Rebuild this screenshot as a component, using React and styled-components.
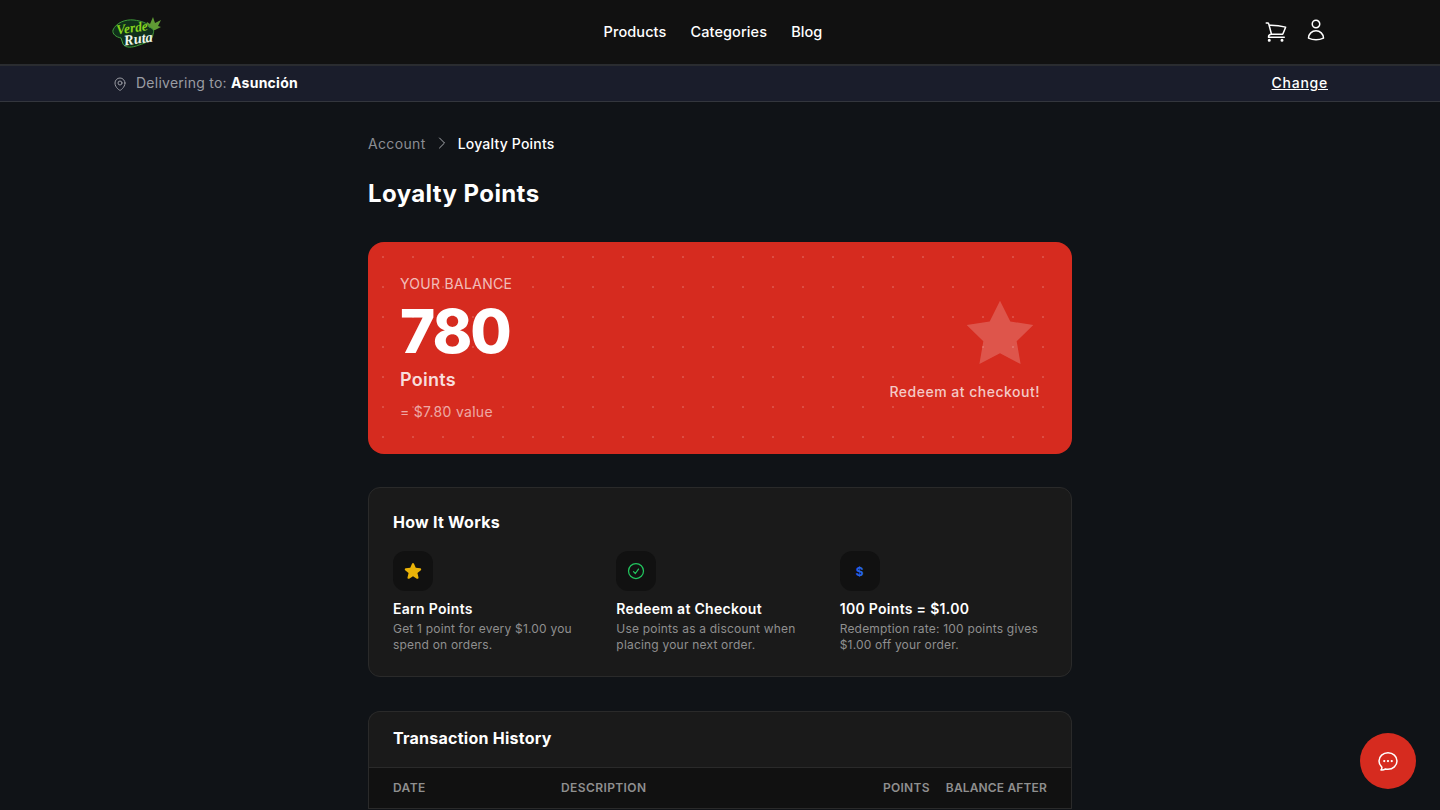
import styled, { createGlobalStyle } from "styled-components";

const GlobalStyle = createGlobalStyle`
  * { box-sizing: border-box; }
  html, body { margin: 0; padding: 0; height: 100%; overflow: hidden; background: #101317; }
  body { font-family: Inter, "Noto Sans", sans-serif; color: #fff; }
`;

const steps = [
  { title: "Earn Points", text: "Get 1 point for every $1.00 you spend on orders.", icon: "star" },
  { title: "Redeem at Checkout", text: "Use points as a discount when placing your next order.", icon: "check" },
  { title: "100 Points = $1.00", text: "Redemption rate: 100 points gives $1.00 off your order.", icon: "dollar" },
];

const Outline = ({ size, width = 1.5, children }) => (
  <svg width={size} height={size} viewBox="0 0 24 24" fill="none" stroke="currentColor" strokeWidth={width} strokeLinecap="round" strokeLinejoin="round">
    {children}
  </svg>
);

const Logo = () => (
  <svg width="50" height="34" viewBox="0 0 50 34">
    {/* leaf */}
    <path d="M33 13 L35 7 L38 9 L41 2 L43 8 L49 5 L46 11 L49 12 L43 15 L37 17 Z" fill="#5f9a34" />
    {/* badge */}
    <path d="M1 15 C4 8 13 4 22 5 C29 6 36 8 37 12 C40 13 43 15 41 19 C41 25 34 28 27 30 C20 33 13 33 11 29 L9 23 C4 22 0 19 1 15 Z" fill="#10301a" stroke="#3f9a3a" strokeWidth="1" />
    <text x="5" y="19.5" fontFamily="'Liberation Serif', serif" fontStyle="italic" fontWeight="700" fontSize="13.5" fill="#86d41e" transform="rotate(-8 5 19)">Verde</text>
    <text x="12.5" y="30.5" fontFamily="'Liberation Serif', serif" fontStyle="italic" fontWeight="700" fontSize="14.5" fill="#eef6ea" transform="rotate(-8 12 30)">Ruta</text>
  </svg>
);

const StepIcon = ({ icon }) => {
  if (icon === "star") {
    return (
      <svg width="20" height="20" viewBox="0 0 24 24" fill="#eab308">
        <path d="M10.788 3.21c.448-1.077 1.976-1.077 2.424 0l2.082 5.007 5.404.433c1.164.093 1.636 1.545.749 2.305l-4.117 3.527 1.257 5.273c.271 1.136-.964 2.033-1.96 1.425L12 18.354 7.373 21.18c-.996.608-2.231-.29-1.96-1.425l1.257-5.273-4.117-3.527c-.887-.76-.415-2.212.749-2.305l5.404-.433 2.082-5.006z" />
      </svg>
    );
  }
  if (icon === "check") {
    return (
      <CheckTone>
        <Outline size={20}>
          <path d="M9 12.75L11.25 15 15 9.75M21 12a9 9 0 11-18 0 9 9 0 0118 0z" />
        </Outline>
      </CheckTone>
    );
  }
  return <DollarMark>$</DollarMark>;
};

export default function App() {
  return (
    <Page>
      <GlobalStyle />
      <Header>
        <HeaderInner>
          <LogoSlot><Logo /></LogoSlot>
          <Nav>
            <NavLink>Products</NavLink>
            <NavLink>Categories</NavLink>
            <NavLink>Blog</NavLink>
          </Nav>
          <HeaderIcons>
            <CartButton>
              <Outline size={24} width={1.5}>
                <path d="M2.25 3h1.386c.51 0 .955.343 1.087.835l.383 1.437M7.5 14.25a3 3 0 00-3 3h15.75m-12.75-3h11.218c1.121-2.3 2.1-4.684 2.924-7.138a60.114 60.114 0 00-16.536-1.84M7.5 14.25L5.106 5.272M6 20.25a.75.75 0 11-1.5 0 .75.75 0 011.5 0zm12.75 0a.75.75 0 11-1.5 0 .75.75 0 011.5 0z" />
              </Outline>
            </CartButton>
            <UserButton>
              <Outline size={24} width={1.5}>
                <path d="M15.75 6a3.75 3.75 0 11-7.5 0 3.75 3.75 0 017.5 0zM4.501 20.118a7.5 7.5 0 0114.998 0A17.933 17.933 0 0112 21.75c-2.676 0-5.216-.584-7.499-1.632z" />
              </Outline>
            </UserButton>
          </HeaderIcons>
        </HeaderInner>
      </Header>

      <DeliveryBar>
        <DeliveryInner>
          <DeliveryLabel>
            <PinTone>
              <Outline size={16}>
                <path d="M15 10.5a3 3 0 11-6 0 3 3 0 016 0z" />
                <path d="M19.5 10.5c0 7.142-7.5 11.25-7.5 11.25S4.5 17.642 4.5 10.5a7.5 7.5 0 1115 0z" />
              </Outline>
            </PinTone>
            <DeliveryText>Delivering to: <City>Asunción</City></DeliveryText>
          </DeliveryLabel>
          <ChangeLink>Change</ChangeLink>
        </DeliveryInner>
      </DeliveryBar>

      <Main>
        <Breadcrumb>
          <Crumb>Account</Crumb>
          <CrumbSep>
            <Outline size={16}><path d="M8.25 4.5l7.5 7.5-7.5 7.5" /></Outline>
          </CrumbSep>
          <CrumbCurrent>Loyalty Points</CrumbCurrent>
        </Breadcrumb>
        <Title>Loyalty Points</Title>

        <BalanceCard>
          <BalanceInfo>
            <BalanceLabel>YOUR BALANCE</BalanceLabel>
            <BalanceValue>780</BalanceValue>
            <BalanceUnit>Points</BalanceUnit>
            <BalanceWorth>= $7.80 value</BalanceWorth>
          </BalanceInfo>
          <RedeemBox>
            <svg width="80" height="80" viewBox="0 0 24 24" fill="rgba(255,255,255,0.2)">
              <polygon points="12 2 15.09 8.26 22 9.27 17 14.14 18.18 21.02 12 17.77 5.82 21.02 7 14.14 2 9.27 8.91 8.26" />
            </svg>
            <RedeemText>Redeem at checkout!</RedeemText>
          </RedeemBox>
        </BalanceCard>

        <HowCard>
          <CardTitle>How It Works</CardTitle>
          <StepGrid>
            {steps.map((s) => (
              <div key={s.title}>
                <IconTile><StepIcon icon={s.icon} /></IconTile>
                <StepTitle>{s.title}</StepTitle>
                <StepText>{s.text}</StepText>
              </div>
            ))}
          </StepGrid>
        </HowCard>

        <HistoryCard>
          <HistoryHead><CardTitle>Transaction History</CardTitle></HistoryHead>
          <TableHead>
            <DateCol>DATE</DateCol>
            <DescCol>DESCRIPTION</DescCol>
            <PointsCol>POINTS</PointsCol>
            <AfterCol>BALANCE AFTER</AfterCol>
          </TableHead>
        </HistoryCard>
      </Main>

      <ChatButton>
        <Outline size={24} width={1.5}>
          <path d="M8.625 12a.375.375 0 11-.75 0 .375.375 0 01.75 0zm0 0H8.25m4.125 0a.375.375 0 11-.75 0 .375.375 0 01.75 0zm0 0H12m4.125 0a.375.375 0 11-.75 0 .375.375 0 01.75 0zm0 0h-.375M21 12c0 4.556-4.03 8.25-9 8.25a9.764 9.764 0 01-2.555-.337A5.972 5.972 0 015.41 20.97a5.969 5.969 0 01-.474-.065 4.48 4.48 0 00.978-2.025c.09-.457-.133-.901-.467-1.226C3.93 16.178 3 14.189 3 12c0-4.556 4.03-8.25 9-8.25s9 3.694 9 8.25z" />
        </Outline>
      </ChatButton>
    </Page>
  );
}

const Page = styled.div`
  height: 810px;
  overflow: hidden;
  background: #101317;
`;

const Header = styled.header`
  height: 66px;
  background: #111111;
  border-bottom: 2px solid #2a2c30;
`;

const HeaderInner = styled.div`
  width: 1216px;
  height: 64px;
  margin: 0 auto;
  display: flex;
  justify-content: space-between;
  align-items: center;
`;

const LogoSlot = styled.div`
  display: flex;
  align-items: center;
`;

const Nav = styled.nav`
  display: flex;
  gap: 24px;
  padding-bottom: 2px;
`;

const NavLink = styled.a`
  font-size: 14.5px;
  font-weight: 500;
  color: #fff;
  letter-spacing: 0.1px;
`;

const HeaderIcons = styled.div`
  display: flex;
  align-items: center;
  gap: 16px;
`;

const CartButton = styled.span`
  display: flex;
  color: #fff;
`;

const UserButton = styled.span`
  display: flex;
  margin-bottom: 4px;
  color: #fff;
`;

const DeliveryBar = styled.div`
  height: 36px;
  background: #1a1d2b;
  border-bottom: 1px solid #33363d;
`;

const DeliveryInner = styled.div`
  width: 1216px;
  height: 35px;
  margin: 0 auto;
  display: flex;
  justify-content: space-between;
  align-items: center;
  font-size: 14px;
`;

const DeliveryLabel = styled.div`
  display: flex;
  align-items: center;
  gap: 8px;
  color: #9a9ca3;
  letter-spacing: 0.25px;
`;

const DeliveryText = styled.span`
  padding-bottom: 2px;
`;

const PinTone = styled.span`
  display: flex;
  color: #9a9ca3;
`;

const City = styled.strong`
  color: #fff;
  font-weight: 700;
`;

const ChangeLink = styled.a`
  padding-bottom: 2px;
  color: #fff;
  font-weight: 500;
  text-decoration: underline;
  letter-spacing: 0.75px;
`;

const Main = styled.main`
  width: 704px;
  margin: 0 auto;
  padding-top: 31px;
`;

const Breadcrumb = styled.div`
  height: 20px;
  display: flex;
  align-items: center;
  font-size: 14px;
  gap: 8px;
`;

const Crumb = styled.span`
  color: #8b8d93;
  letter-spacing: 0.35px;
`;

const CrumbSep = styled.span`
  display: flex;
  color: #a9abb0;
`;

const CrumbCurrent = styled.span`
  color: #fff;
  font-weight: 500;
  letter-spacing: 0.2px;
`;

const Title = styled.h1`
  margin: 25px 0 32px;
  font-size: 24px;
  line-height: 32px;
  font-weight: 700;
  color: #fff;
  letter-spacing: 0.4px;
`;

const BalanceCard = styled.section`
  height: 212px;
  padding: 32px;
  border-radius: 16px;
  display: flex;
  justify-content: space-between;
  align-items: center;
  background-color: #d62b1f;
  background-image: radial-gradient(circle at center, rgba(255, 255, 255, 0.16) 1px, transparent 1.2px);
  background-size: 30px 30px;
`;

const BalanceInfo = styled.div`
  align-self: flex-start;
`;

const BalanceLabel = styled.div`
  font-size: 14px;
  line-height: 20px;
  color: rgba(255, 255, 255, 0.7);
  letter-spacing: 0.3px;
`;

const BalanceValue = styled.div`
  margin-top: 7px;
  font-size: 60px;
  line-height: 60px;
  font-weight: 800;
  color: #fff;
  letter-spacing: -2px;
`;

const BalanceUnit = styled.div`
  margin-top: 5px;
  font-size: 18px;
  line-height: 28px;
  font-weight: 600;
  color: rgba(255, 255, 255, 0.85);
  letter-spacing: 0.3px;
`;

const BalanceWorth = styled.div`
  margin-top: 8px;
  font-size: 14px;
  line-height: 20px;
  color: rgba(255, 255, 255, 0.6);
  letter-spacing: 0.3px;
`;

const RedeemBox = styled.div`
  display: flex;
  flex-direction: column;
  align-items: flex-end;
  gap: 8px;
`;

const RedeemText = styled.div`
  font-size: 14px;
  line-height: 20px;
  font-weight: 500;
  color: rgba(255, 255, 255, 0.75);
  letter-spacing: 0.5px;
`;

const HowCard = styled.section`
  margin-top: 33px;
  height: 190px;
  padding: 23px 24px 24px;
  background: #1a1a1a;
  border: 1px solid #2a2a2a;
  border-radius: 12px;
`;

const CardTitle = styled.h2`
  margin: 0;
  font-size: 16px;
  line-height: 22px;
  font-weight: 700;
  color: #fff;
  letter-spacing: 0.25px;
`;

const StepGrid = styled.div`
  margin-top: 18px;
  display: grid;
  grid-template-columns: repeat(3, 1fr);
  gap: 16px;
`;

const IconTile = styled.div`
  width: 40px;
  height: 40px;
  border-radius: 12px;
  background: #111111;
  display: flex;
  align-items: center;
  justify-content: center;
`;

const CheckTone = styled.span`
  display: flex;
  color: #22c55e;
`;

const DollarMark = styled.span`
  font-size: 12px;
  font-weight: 700;
  color: #2563eb;
`;

const StepTitle = styled.div`
  margin-top: 8px;
  font-size: 14px;
  line-height: 20px;
  font-weight: 600;
  color: #fff;
  letter-spacing: 0.3px;
`;

const StepText = styled.div`
  margin-top: 2px;
  font-size: 12px;
  line-height: 16px;
  color: #8f8f8f;
  letter-spacing: 0.2px;
`;

const HistoryCard = styled.section`
  margin-top: 34px;
  background: #1a1a1a;
  border: 1px solid #2a2a2a;
  border-radius: 12px 12px 0 0;
  border-bottom: none;
`;

const HistoryHead = styled.div`
  height: 56px;
  padding: 15px 24px;
  border-bottom: 1px solid #2a2a2a;
`;

const TableHead = styled.div`
  height: 41px;
  padding: 0 24px 2px;
  display: flex;
  align-items: center;
  background: #111111;
  border-bottom: 1px solid #2a2a2a;
  font-size: 12px;
  font-weight: 600;
  color: #8f8f8f;
  letter-spacing: 0.4px;
`;

const DateCol = styled.span`
  width: 168px;
`;

const DescCol = styled.span`
  flex: 1;
`;

const PointsCol = styled.span`
  margin-right: 16px;
  letter-spacing: 0.3px;
`;

const AfterCol = styled.span`
  letter-spacing: 0.15px;
`;

const ChatButton = styled.button`
  position: fixed;
  right: 24px;
  bottom: 21px;
  width: 56px;
  height: 56px;
  border: none;
  border-radius: 50%;
  padding: 0;
  background: #d62b1f;
  color: #fff;
  display: flex;
  align-items: center;
  justify-content: center;
`;
